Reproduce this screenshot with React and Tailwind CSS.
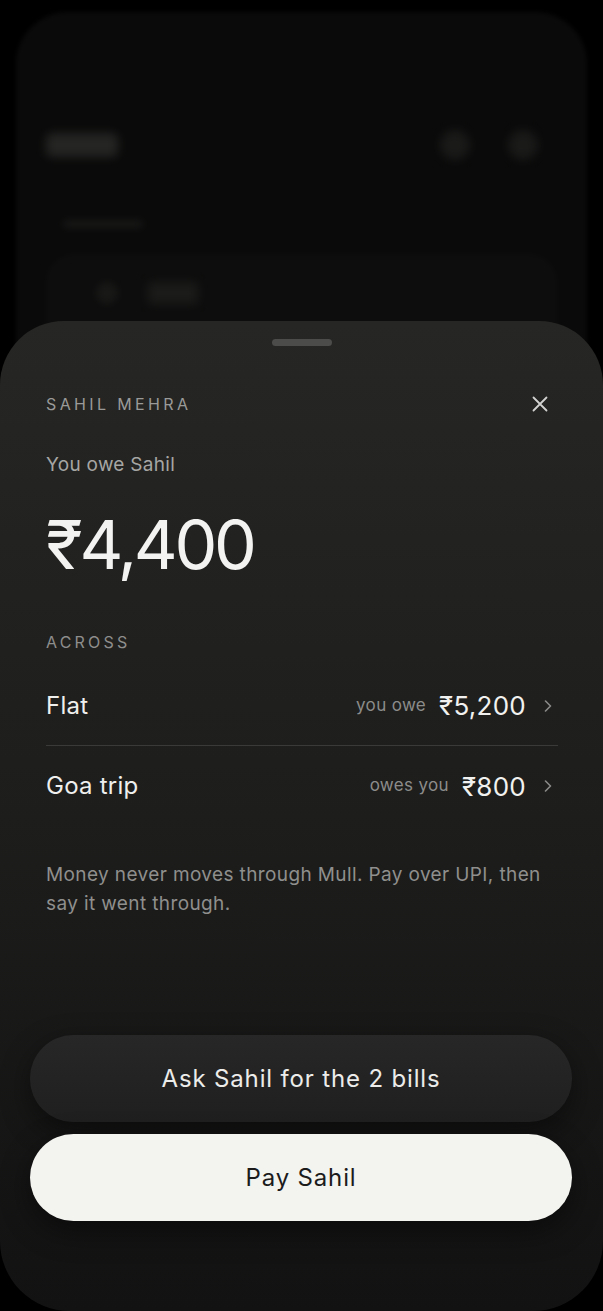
import React from "react";

const font = { fontFamily: "Inter, 'Noto Sans', sans-serif" };

function Chevron() {
  return (
    <svg width="8" height="12" viewBox="0 0 8 12" fill="none" className="ml-[18px] mr-[6px]">
      <polyline points="1.5,1 6.5,6 1.5,11" stroke="#8a8a88" strokeWidth="1.6" strokeLinecap="round" strokeLinejoin="round" />
    </svg>
  );
}

function Row({ name, label, amount, border }) {
  return (
    <div className={"flex h-[80px] items-center justify-between " + (border ? "border-b border-[#3a3a39]" : "")}>
      <span className="text-[24px] tracking-[0.01em] text-[#efefed]">{name}</span>
      <div className="flex items-center">
        <span className="mr-[13px] text-[17px] tracking-[0.02em] text-[#8c8c8a]">{label}</span>
        <span className="text-[26px] tracking-[0.01em] text-[#f1f1ef]">{amount}</span>
        <Chevron />
      </div>
    </div>
  );
}

export default function App() {
  return (
    <div className="relative h-[1311px] w-[603px] overflow-hidden bg-black" style={font}>
      {/* blurred app behind the sheet */}
      <div className="absolute left-[16px] right-[16px] top-[12px] h-[600px] rounded-[52px] bg-[#0a0a0a] blur-[2px]">
        <div className="flex items-center justify-between px-[30px] pt-[118px]">
          <div className="h-[24px] w-[72px] rounded-md bg-[#252524] blur-[4px]" />
          <div className="flex gap-[38px] pr-[19px]">
            <div className="h-[30px] w-[30px] rounded-full bg-[#1a1a19] blur-[4px]" />
            <div className="h-[30px] w-[30px] rounded-full bg-[#1a1a19] blur-[4px]" />
          </div>
        </div>
        <div className="ml-[47px] mt-[60px] h-[8px] w-[80px] rounded bg-[#181817] blur-[3px]" />
        <div className="mx-[30px] mt-[26px] h-[200px] rounded-[28px] bg-[#0d0d0d]">
          <div className="flex items-center gap-[30px] px-[50px] pt-[28px]">
            <div className="h-[22px] w-[22px] rounded-full bg-[#181817] blur-[3px]" />
            <div className="h-[22px] w-[50px] rounded bg-[#1b1b1a] blur-[4px]" />
          </div>
        </div>
      </div>

      {/* sheet */}
      <div className="relative mt-[321px] flex h-[990px] flex-col rounded-t-[64px] rounded-b-[70px] bg-linear-to-b from-[#262624] via-[#1d1d1c] to-[#121212]">
        <div className="mx-auto mt-[18px] h-[7px] w-[60px] rounded-full bg-[#4c4c4a]" />

        <div className="px-[46px]">
          <div className="mt-[46px] flex h-[24px] items-center justify-between">
            <span className="text-[16px] tracking-[0.21em] text-[#9a9a98]">SAHIL MEHRA</span>
            <svg width="16" height="16" viewBox="0 0 16 16" fill="none" className="mr-[9px]">
              <path d="M1.5 1.5L14.5 14.5M14.5 1.5L1.5 14.5" stroke="#d2d2d0" strokeWidth="1.8" strokeLinecap="round" />
            </svg>
          </div>

          <div className="mt-[35px] text-[19px] leading-[28px] tracking-[0.015em] text-[#a6a6a4]">You owe Sahil</div>

          <div className="mt-[31px] text-[68px] leading-[68px] tracking-[-0.05em] text-[#f3f3f1]">
            ₹4,400
          </div>

          <div className="mt-[52px] text-[16px] leading-[24px] tracking-[0.2em] text-[#8e8e8c]">ACROSS</div>

          <div className="mt-[12px] mr-[-1px]">
            <Row name="Flat" label="you owe" amount="₹5,200" border />
            <Row name="Goa trip" label="owes you" amount="₹800" />
          </div>

          <p className="mt-[34px] text-[19px] leading-[29px] tracking-[0.02em] text-[#8f8f8d]">
            Money never moves through Mull. Pay over UPI, then say it went through.
          </p>
        </div>

        <div className="mt-auto flex flex-col gap-[12px] px-[30px] pb-[90px]">
          <button className="flex h-[87px] w-[542px] items-center justify-center rounded-full bg-linear-to-b from-[#272727] to-[#1f1f1f] text-[24px] tracking-[0.035em] text-[#ececea] shadow-[0_10px_30px_rgba(0,0,0,0.45)]">
            Ask Sahil for the 2 bills
          </button>
          <button className="flex h-[87px] w-[542px] items-center justify-center rounded-full bg-[#f3f3f0] text-[24px] tracking-[0.035em] text-[#1b1b1b] shadow-[0_10px_30px_rgba(0,0,0,0.45)]">
            Pay Sahil
          </button>
        </div>
      </div>
    </div>
  );
}
